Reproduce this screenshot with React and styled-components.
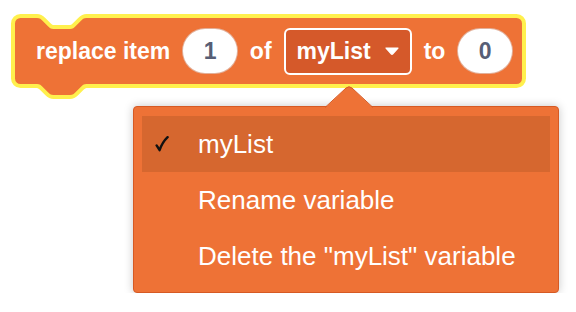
import React from "react";
import styled, { createGlobalStyle } from "styled-components";

const GlobalStyle = createGlobalStyle`
  body {
    margin: 0;
    background: #ffffff;
    font-family: "Liberation Sans", Arial, sans-serif;
  }
`;

const orange = "#EE7236";
const orangeDark = "#D5592A";
const glow = "#FFF04D";

// Scratch style outline with a notch on top and a tab below
function blockPath(w, h, s) {
  const r = 4 * s;
  const u = (n) => n * s;
  return [
    `M 0 ${r}`,
    `A ${r} ${r} 0 0 1 ${r} 0`,
    `H ${u(16)}`,
    `c ${u(2)} 0 ${u(3)} ${u(1)} ${u(4)} ${u(2)}`,
    `l ${u(4)} ${u(4)}`,
    `c ${u(1)} ${u(1)} ${u(2)} ${u(2)} ${u(4)} ${u(2)}`,
    `h ${u(12)}`,
    `c ${u(2)} 0 ${u(3)} ${-u(1)} ${u(4)} ${-u(2)}`,
    `l ${u(4)} ${-u(4)}`,
    `c ${u(1)} ${-u(1)} ${u(2)} ${-u(2)} ${u(4)} ${-u(2)}`,
    `H ${w - r}`,
    `A ${r} ${r} 0 0 1 ${w} ${r}`,
    `V ${h - r}`,
    `A ${r} ${r} 0 0 1 ${w - r} ${h}`,
    `H ${u(52)}`,
    `c ${-u(2)} 0 ${-u(3)} ${u(1)} ${-u(4)} ${u(2)}`,
    `l ${-u(4)} ${u(4)}`,
    `c ${-u(1)} ${u(1)} ${-u(2)} ${u(2)} ${-u(4)} ${u(2)}`,
    `h ${-u(12)}`,
    `c ${-u(2)} 0 ${-u(3)} ${-u(1)} ${-u(4)} ${-u(2)}`,
    `l ${-u(4)} ${-u(4)}`,
    `c ${-u(1)} ${-u(1)} ${-u(2)} ${-u(2)} ${-u(4)} ${-u(2)}`,
    `H ${r}`,
    `A ${r} ${r} 0 0 1 0 ${h - r}`,
    "Z",
  ].join(" ");
}

const BLOCK_W = 507;
const BLOCK_H = 66;

const Page = styled.div`
  display: flex;
  flex-direction: column;
  align-items: flex-start;
  padding: 18px 0 0 15px;
`;

const Block = styled.div`
  position: relative;
  display: flex;
  align-items: center;
  gap: 12px;
  width: ${BLOCK_W}px;
  height: ${BLOCK_H}px;
  box-sizing: border-box;
  padding: 0 9px 0 21px;
`;

const BlockShape = styled.svg`
  position: absolute;
  left: 0;
  top: 0;
  overflow: visible;
  z-index: 0;
`;

const Label = styled.span`
  position: relative;
  z-index: 1;
  color: #ffffff;
  font-weight: bold;
  font-size: 23px;
  white-space: nowrap;
`;

const NumberInput = styled.span`
  position: relative;
  z-index: 1;
  display: flex;
  align-items: center;
  justify-content: center;
  width: ${(p) => p.width || 57}px;
  height: 46px;
  box-sizing: border-box;
  border-radius: 23px;
  background: #ffffff;
  border: 1px solid rgba(190, 80, 30, 0.45);
  color: #575e75;
  font-weight: bold;
  font-size: 23px;
`;

const Dropdown = styled.span`
  position: relative;
  z-index: 1;
  display: flex;
  align-items: center;
  gap: 14px;
  height: 47px;
  box-sizing: border-box;
  padding: 0 11px 0 11px;
  border: 2px solid #ffffff;
  border-radius: 6px;
  background: ${orangeDark};
  color: #ffffff;
  font-weight: bold;
  font-size: 23px;
`;

const Menu = styled.div`
  position: relative;
  margin: 22px 0 0 118px;
  width: 426px;
  box-sizing: border-box;
  padding: 9px 8px 8px;
  background: ${orange};
  border: 1px solid #d65a24;
  border-radius: 4px;
  box-shadow: 0 0 10px rgba(0, 0, 0, 0.22);
`;

const MenuArrow = styled.svg`
  position: absolute;
  left: 191px;
  top: -21px;
  overflow: visible;
`;

const MenuItem = styled.div`
  display: flex;
  align-items: center;
  height: 56px;
  background: ${(p) => (p.selected ? "#D6672F" : "transparent")};
  color: #ffffff;
  font-size: 26px;
  white-space: nowrap;
`;

const CheckSlot = styled.span`
  display: flex;
  align-items: center;
  width: 56px;
  box-sizing: border-box;
  padding-left: 13px;
`;

function Caret() {
  return (
    <svg width="14" height="8" viewBox="0 0 14 8">
      <path d="M1 1 L13 1 L7.6 7 Q7 7.6 6.4 7 Z" fill="#ffffff" stroke="#ffffff" strokeWidth="1.2" strokeLinejoin="round" />
    </svg>
  );
}

function Tick() {
  return (
    <svg width="14" height="16" viewBox="0 0 14 16">
      <path
        d="M1.6 9.4 L4.6 14.2 Q7.2 6.4 12.6 1.2"
        fill="none"
        stroke="#111111"
        strokeWidth="2.4"
        strokeLinecap="round"
        strokeLinejoin="round"
      />
    </svg>
  );
}

export default function App() {
  const s = BLOCK_H / 48;
  const d = blockPath(BLOCK_W, BLOCK_H, s);
  return (
    <>
      <GlobalStyle />
      <Page>
        <Block>
          <BlockShape width={BLOCK_W} height={BLOCK_H}>
            <path d={d} fill={glow} stroke={glow} strokeWidth="8" strokeLinejoin="round" />
            <path d={d} fill={orange} />
          </BlockShape>
          <Label>replace item</Label>
          <NumberInput>1</NumberInput>
          <Label>of</Label>
          <Dropdown>
            myList
            <Caret />
          </Dropdown>
          <Label>to</Label>
          <NumberInput>0</NumberInput>
        </Block>
        <Menu>
          <MenuArrow width="48" height="22" viewBox="0 0 48 22">
            <path d="M0 22 L21 2 Q24 -0.5 27 2 L48 22 Z" fill={orange} />
            <path d="M0 21.5 L21 2 Q24 -0.5 27 2 L48 21.5" fill="none" stroke="#d65a24" strokeWidth="1" />
          </MenuArrow>
          <MenuItem selected>
            <CheckSlot>
              <Tick />
            </CheckSlot>
            myList
          </MenuItem>
          <MenuItem>
            <CheckSlot />
            Rename variable
          </MenuItem>
          <MenuItem>
            <CheckSlot />
            Delete the "myList" variable
          </MenuItem>
        </Menu>
      </Page>
    </>
  );
}
